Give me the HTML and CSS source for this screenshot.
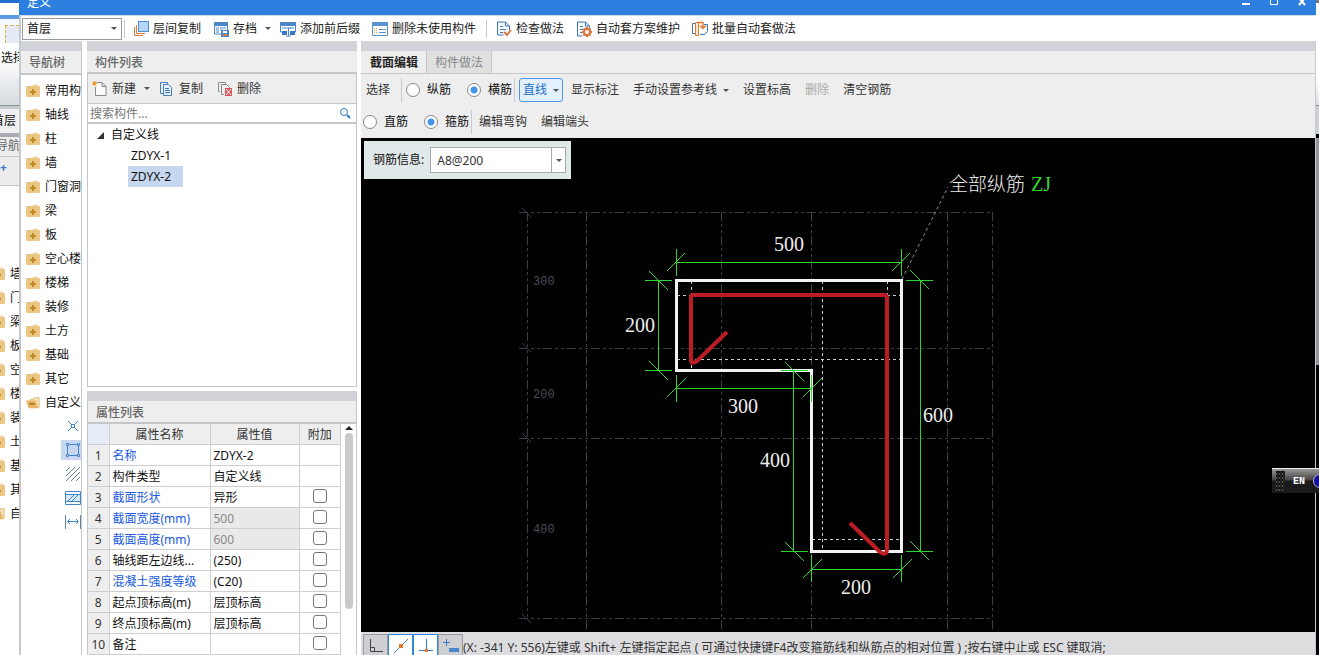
FILE: index.html
```html
<!DOCTYPE html>
<html lang="zh-CN">
<head>
<meta charset="utf-8">
<title>定义</title>
<link rel="stylesheet" href="styles.css">
</head>
<body>
<svg class="defs" width="0" height="0" aria-hidden="true">
  <symbol id="folder" viewBox="0 0 14 14"><path d="M7 2V.5h5V2" fill="#efd9ae"/><rect y="2" width="14" height="11" rx="1" fill="#ecc784"/><path d="M7 5v6M4 8h6" stroke="#c08a2c" stroke-width="2"/></symbol>
  <symbol id="folder-open" viewBox="0 0 16 14"><path d="M5 3h3l1-2h6v11H5z" fill="#f6e3bd" stroke="#e3b35f"/><path d="M0 4h11l3 9H3z" fill="#e6b463"/><path d="M4 8h6" stroke="#a87520" stroke-width="2"/></symbol>
  <symbol id="i-layers" viewBox="0 0 16 16"><path d="M1.500 6v8.500H10M3.500 4v8.500H12" fill="none" stroke="#d87b3a"/><rect x="5.500" y=".5" width="10" height="10" fill="#b5d6fa" stroke="#4c8fd8"/></symbol>
  <symbol id="i-save" viewBox="0 0 16 16"><path d="M1 1h14v4H1z" fill="#4a86c8"/><path d="M1.500 1v12H8M14.500 4v5M3 7h3M7 7h6M3 9h3M7 9h2M3 11h3" fill="none" stroke="#4a86c8"/><path d="M8 9h8v7H8z" fill="#4a86c8"/><path d="M10 10h4v2h-4z" fill="#fff"/><path d="M10 13h4v2h-4z" fill="#e67a35"/></symbol>
  <symbol id="i-affix" viewBox="0 0 16 16"><path d="M0 1h16v4H0z" fill="#4a86c8"/><path d="M.5 2v9H5M15.500 2v9H12M2 7h4M10 7h4M6 7h5M8.500 7v8M6 15h5" fill="none" stroke="#4a86c8"/><path d="M2 10h5v4H2zM10 10h5v4h-5z" fill="#3878c5"/></symbol>
  <symbol id="i-list" viewBox="0 0 16 16"><path d="M.5 1.500h15v13H.5z" fill="#fff" stroke="#5a8fc8"/><path d="M0 1h16v4H0z" fill="#5a93d2"/><path d="M2 7.500h3M2 9.500h3M2 11.500h3" stroke="#e29b3c" stroke-dasharray="1 1"/><path d="M7 8.500h7M7 11.500h7" stroke="#5a8fc8"/></symbol>
  <symbol id="i-check" viewBox="0 0 16 16"><path d="M13.500 9V5l-4-4h-8v13h6M9.500 1v4h4" fill="#f5f9fe" stroke="#4077b5"/><path d="M4 5.500h3M4 8.500h6M4 11.500h3" stroke="#4077b5"/><path d="m8 11 3 3 4-5" fill="none" stroke="#df783f" stroke-width="2"/></symbol>
  <symbol id="i-gear" viewBox="0 0 16 16"><path d="M13.500 7V5l-4-4h-8v14h5M9.500 1v4h4" fill="#f5f9fe" stroke="#4077b5"/><path d="M4 5.500h3M4 8.500h3M4 11.500h2" stroke="#4077b5"/><circle cx="11" cy="11" r="3" fill="#fff" stroke="#df743a" stroke-width="2"/><path d="M11 6v2M11 14v2M6 11h2M14 11h2M7.500 7.500 9 9M13 13l1.500 1.500M14.500 7.500 13 9M9 13l-1.500 1.500" stroke="#df743a" stroke-width="2"/></symbol>
  <symbol id="i-batch" viewBox="0 0 16 16"><path d="M3 2.500H.5v10H3M12 3.500h3.500v7l-3 3H8" fill="none" stroke="#4077b5"/><path d="M3.500 1.500h3v13h-3z" fill="#fde6cf" stroke="#e27a32"/><path d="M6 1.500h5V7M8 4.500l3 3 3-3" fill="none" stroke="#e27a32" stroke-width="1.500"/></symbol>
  <symbol id="i-new" viewBox="0 0 16 16"><path d="M5 1.500h5l4 4v9H3.500V6M10 1.500v4h4" fill="#fbfbfb" stroke="#8a8a8a"/><path d="M2.500 0v5M0 2.500h5M.5.500l4 4M4.500.500l-4 4" stroke="#e99a2e"/></symbol>
  <symbol id="i-copy" viewBox="0 0 16 16"><path d="M4 12.500H1.500v-11h7V3" fill="none" stroke="#4680bd"/><path d="M4.500 3.500h5l3 3v8h-8z" fill="#e6f1fc" stroke="#4680bd"/><path d="M6 7.500h4M6 9.500h5M6 11.500h5" stroke="#4680bd"/></symbol>
  <symbol id="i-del" viewBox="0 0 16 16"><path d="M3 10.500H1.500v-9h7V3M7 13.500H4.500v-10h5l3 3V7" fill="none" stroke="#8a8a8a"/><path d="M8 7h7v8H8z" fill="#d9535b"/><path d="m9 8 5 6m0-6-5 6" stroke="#fff"/></symbol>
</svg>

<div class="desktop">
  <aside class="backdrop">
    <div class="back-title"></div>
    <div class="back-ribbon"><i class="back-frame"></i><span>选择</span></div>
    <div class="back-floor">首层</div>
    <div class="back-head">导航树</div>
    <div class="back-tools"><b>+</b></div>
    <ul class="back-list">
      <li><svg><use href="#folder"/></svg>墙</li>
      <li><svg><use href="#folder"/></svg>门窗洞</li>
      <li><svg><use href="#folder"/></svg>梁</li>
      <li><svg><use href="#folder"/></svg>板</li>
      <li><svg><use href="#folder"/></svg>空心楼</li>
      <li><svg><use href="#folder"/></svg>楼梯</li>
      <li><svg><use href="#folder"/></svg>装修</li>
      <li><svg><use href="#folder"/></svg>土方</li>
      <li><svg><use href="#folder"/></svg>基础</li>
      <li><svg><use href="#folder"/></svg>其它</li>
      <li><svg><use href="#folder-open"/></svg>自定义</li>
    </ul>
  </aside>

  <main class="window">
    <header class="titlebar">
      <span class="title">定义</span>
      <span class="window-buttons">
        <button aria-label="最小化"><svg viewBox="0 0 8 8"><path d="M0 4h8" stroke-width="2"/></svg></button>
        <button aria-label="最大化"><svg viewBox="0 0 8 8"><path d="M.5 0v4.500h7V0"/></svg></button>
        <button aria-label="关闭"><svg viewBox="0 0 8 8"><path d="M1-2l6 7M7-2 1 5" stroke-width="2"/></svg></button>
      </span>
    </header>

    <nav class="toolbar">
      <span class="floor"><select aria-label="楼层"><option>首层</option></select><i class="caret"></i></span>
      <i class="sep"></i>
      <button class="tool"><svg><use href="#i-layers"/></svg>层间复制</button>
      <button class="tool drop"><svg><use href="#i-save"/></svg>存档<i class="caret"></i></button>
      <button class="tool"><svg><use href="#i-affix"/></svg>添加前后缀</button>
      <button class="tool"><svg><use href="#i-list"/></svg>删除未使用构件</button>
      <i class="sep wide"></i>
      <button class="tool"><svg><use href="#i-check"/></svg>检查做法</button>
      <button class="tool"><svg><use href="#i-gear"/></svg>自动套方案维护</button>
      <button class="tool"><svg><use href="#i-batch"/></svg>批量自动套做法</button>
    </nav>

    <div class="columns">
      <section class="panel nav-panel">
        <h2 class="panel-head">导航树</h2>
        <ul class="nav-list">
          <li><svg><use href="#folder"/></svg>常用构件</li>
          <li><svg><use href="#folder"/></svg>轴线</li>
          <li><svg><use href="#folder"/></svg>柱</li>
          <li><svg><use href="#folder"/></svg>墙</li>
          <li><svg><use href="#folder"/></svg>门窗洞</li>
          <li><svg><use href="#folder"/></svg>梁</li>
          <li><svg><use href="#folder"/></svg>板</li>
          <li><svg><use href="#folder"/></svg>空心楼盖</li>
          <li><svg><use href="#folder"/></svg>楼梯</li>
          <li><svg><use href="#folder"/></svg>装修</li>
          <li><svg><use href="#folder"/></svg>土方</li>
          <li><svg><use href="#folder"/></svg>基础</li>
          <li><svg><use href="#folder"/></svg>其它</li>
          <li><svg><use href="#folder-open"/></svg>自定义</li>
        </ul>
        <ul class="shape-list">
          <li><svg viewBox="0 0 16 16"><path d="m3 3 4 4m2 2 4 4M13 3 9 7M7 9l-4 4M6.500 6.500h3v3h-3z"/></svg></li>
          <li class="selected"><svg viewBox="0 0 16 16"><path d="M2.500 4v8M13.500 4v8M4 2.500h8M4 13.500h8M1.500 1.500h2v2h-2zM12.500 1.500h2v2h-2zM1.500 12.500h2v2h-2zM12.500 12.500h2v2h-2z"/></svg></li>
          <li><svg viewBox="0 0 16 16" class="slate"><path d="m1 5 4-4M1 10l9-9M1 15 15 1M6 15l9-9M11 15l4-4"/></svg></li>
          <li><svg viewBox="0 0 16 16"><path fill="#d6e9fa" d="M.5 4.500h15v7H.5z"/><path d="M.5 1.500h15v13H.5zM3 11l6-6M7 11l6-6"/></svg></li>
          <li><svg viewBox="0 0 16 16"><path class="slate" d="M.5 1v14M15.500 1v14"/><path d="M3 7.500h10M5 5 2.500 7.500 5 10M11 5l2.500 2.500L11 10"/></svg></li>
        </ul>
      </section>

      <div class="stack">
        <section class="panel list-panel">
          <h2 class="panel-head">构件列表</h2>
          <div class="list-tools">
            <button class="tool"><svg><use href="#i-new"/></svg>新建<i class="caret"></i></button>
            <button class="tool"><svg><use href="#i-copy"/></svg>复制</button>
            <button class="tool"><svg><use href="#i-del"/></svg>删除</button>
          </div>
          <label class="search">
            <input type="text" placeholder="搜索构件..." aria-label="搜索构件">
            <svg viewBox="0 0 12 12"><circle cx="5" cy="5" r="3.500"/><path d="m8 8 3 3" stroke-width="2"/></svg>
          </label>
          <ul class="tree">
            <li><svg viewBox="0 0 7 7"><path d="M7 0v7H0z"/></svg>自定义线
              <ul><li><span>ZDYX-1</span></li><li><span class="selected">ZDYX-2</span></li></ul>
            </li>
          </ul>
        </section>

        <section class="panel props-panel">
          <h2 class="panel-head">属性列表</h2>
          <div class="props-body">
            <table class="props">
              <thead><tr><th></th><th>属性名称</th><th>属性值</th><th>附加</th></tr></thead>
              <tbody>
                <tr><th>1</th><td class="link">名称</td><td>ZDYX-2</td><td></td></tr>
                <tr><th>2</th><td>构件类型</td><td>自定义线</td><td></td></tr>
                <tr><th>3</th><td class="link">截面形状</td><td>异形</td><td><input type="checkbox" aria-label="附加 截面形状"></td></tr>
                <tr><th>4</th><td class="link">截面宽度(mm)</td><td class="locked">500</td><td><input type="checkbox" aria-label="附加 截面宽度"></td></tr>
                <tr><th>5</th><td class="link">截面高度(mm)</td><td class="locked">600</td><td><input type="checkbox" aria-label="附加 截面高度"></td></tr>
                <tr><th>6</th><td>轴线距左边线...</td><td>(250)</td><td><input type="checkbox" aria-label="附加 轴线距左边线"></td></tr>
                <tr><th>7</th><td class="link">混凝土强度等级</td><td>(C20)</td><td><input type="checkbox" aria-label="附加 混凝土强度等级"></td></tr>
                <tr><th>8</th><td>起点顶标高(m)</td><td>层顶标高</td><td><input type="checkbox" aria-label="附加 起点顶标高"></td></tr>
                <tr><th>9</th><td>终点顶标高(m)</td><td>层顶标高</td><td><input type="checkbox" aria-label="附加 终点顶标高"></td></tr>
                <tr><th>10</th><td>备注</td><td></td><td><input type="checkbox" aria-label="附加 备注"></td></tr>
              </tbody>
            </table>
            <div class="scroll"><i class="scroll-up"></i><i class="scroll-thumb"></i></div>
          </div>
        </section>
      </div>

      <section class="editor">
        <div class="tabs"><button class="tab active">截面编辑</button><button class="tab">构件做法</button></div>
        <div class="edit-row">
          <button class="cmd first">选择</button><i class="sep"></i>
          <label class="radio"><input type="radio" name="dir">纵筋</label>
          <label class="radio"><input type="radio" name="dir" checked>横筋</label>
          <i class="sep"></i>
          <button class="cmd pressed">直线<i class="caret"></i></button>
          <button class="cmd">显示标注</button>
          <button class="cmd">手动设置参考线<i class="caret"></i></button>
          <button class="cmd">设置标高</button>
          <button class="cmd" disabled>删除</button>
          <button class="cmd">清空钢筋</button>
        </div>
        <div class="edit-row hoop-row">
          <label class="radio"><input type="radio" name="bar">直筋</label>
          <label class="radio"><input type="radio" name="bar" checked>箍筋</label>
          <i class="sep"></i>
          <button class="cmd">编辑弯钩</button>
          <button class="cmd">编辑端头</button>
        </div>
        <div class="canvas">
          <svg class="drawing" role="img" aria-label="截面">
            <g transform="translate(-361 -138)">
              <g class="axis">
                <path d="M519 212.500H993M519 348.500H993M519 438.500H993M519 618.500H993M527.500 212V618M586.500 212V640M721.500 212V640M811.500 212V640M947.500 212V640M992.500 212V640"/>
                <path class="solid" d="m522 208 9 9M522 343l9 9M522 433l9 9M522 614l9 9"/>
                <text x="533" y="285">300</text><text x="533" y="398">200</text><text x="533" y="533">400</text>
              </g>
              <path class="leader" d="M902 279 948 187"/>
              <path class="guide" d="M677 295.500h14M691.500 281v14M677 359.500h224M691.500 359v11M822.500 281V551M887.500 281v14M887 295.500h14M812 539.500h89"/>
              <path class="outline" d="M676.500 280.500h225v271h-90v-181h-135z"/>
              <path class="rebar" d="m727 332-30 29q-6 4-6-1v-63q0-2 2-2h191q3 0 3 3v250q0 9-7 4l-30-29"/>
              <g class="dim">
                <path d="M677 262.500H901M676.500 249v27M901.500 249v27M667 271l18-18M892 271l18-18"/>
                <path d="M658.500 280V370M645 280.500h27M645 370.500h27M649 271l19 19M649 361l19 19"/>
                <path d="M677 388.500H811M676.500 375v27M811.500 375v27M667 397l19-19M803 397l19-19"/>
                <path d="M793.500 370V551M781 370.500h27M781 551.500h27M785 362l19 19M785 542l19 19"/>
                <path d="M920.500 280V551M906 280.500h27M906 551.500h27M910 270l19 19M910 541l19 19"/>
                <path d="M811 569.500H901M811.500 555v27M901.500 555v27M803 578l19-19M893 578l19-19"/>
              </g>
              <g class="dim-text">
                <text x="774" y="251">500</text><text x="625" y="332">200</text><text x="728" y="413">300</text>
                <text x="760" y="467">400</text><text x="923" y="422">600</text><text x="841" y="594">200</text>
              </g>
              <text class="note" x="949" y="191">全部纵筋</text>
              <text class="note-code" x="1031" y="191">ZJ</text>
            </g>
          </svg>
          <div class="rebar-info">
            <label for="rebar">钢筋信息:</label>
            <span class="combo"><input id="rebar" type="text" value="A8@200"><button aria-label="展开"><i class="caret"></i></button></span>
          </div>
        </div>
        <footer class="status">
          <button aria-label="正交"><svg viewBox="0 0 16 16"><path d="M2.500 1v12.500H15M3 9.500h3.500v4" stroke="#444"/></svg></button>
          <button class="on" aria-label="中点"><svg viewBox="0 0 16 16"><path d="M1 15 15 1" stroke="#4b84bd"/><path d="M6 6h4v4H6z" fill="#e27a32"/></svg></button>
          <button class="on" aria-label="垂点"><svg viewBox="0 0 16 16"><path d="M8.500 1v11M1 12.500h14" stroke="#3b78c0"/><path d="M7 11h3v3H7z" fill="#e27a32"/></svg></button>
          <button aria-label="动态输入"><svg viewBox="0 0 16 16"><path d="M3.500 1v7M0 4.500h7" stroke="#3b78c0"/><path d="M6 10h10v4H6z" fill="#4a87cf"/></svg></button>
          <output>(X: -341 Y: 556)左键或 Shift+ 左键指定起点 ( 可通过快捷键F4改变箍筋线和纵筋点的相对位置 ) ;按右键中止或 ESC 键取消;</output>
        </footer>
      </section>
    </div>
  </main>

  <aside class="backdrop-right"><div class="edge-ribbon"></div><div class="edge-bar"></div><div class="edge-scroll"></div></aside>
  <div class="ime"><i class="grip"></i><span>EN</span><i class="orb"></i></div>
</div>
</body>
</html>
```

FILE: styles.css
```css
* { box-sizing: border-box; }
body { margin: 0; color: #111; background: #000; font: 12px/16px "Noto Sans", "Noto Sans CJK SC", sans-serif; }
ul { margin: 0; padding: 0; list-style: none; }
button, input, select { margin: 0; font: inherit; color: inherit; }
button { padding: 0; border: 0; background: none; white-space: nowrap; }
.defs { position: absolute; }

.desktop { position: relative; display: grid; grid-template-columns: 19px minmax(0, 1fr) 3px; height: 100vh; overflow: hidden; }

/* Host application visible at the left edge */
.backdrop { overflow: hidden; background: #fff; white-space: nowrap; }
.back-title { height: 19px; background: linear-gradient(#1f6fd0 3px, #fff 3px 15px, #5b9be6 15px); }
.back-ribbon { height: 87px; padding-top: 6px; background: linear-gradient(#f6f9fc 24px, #fff 24px, #f4f6f8 50px, #d5dadd); border-bottom: 1px solid #8f9498; }
.back-ribbon span { display: block; padding: 7px 0 0 1px; }
.back-frame { display: block; height: 18px; margin-left: 5px; border: 1px dashed #e2b13c; border-right: 0; border-bottom: 0; background: linear-gradient(90deg, #e4ebf5 13px, #3b7bd0 13px); }
.back-floor { height: 27px; padding: 4px 3px 0 0; border-top: 3px solid #c5c9cc; background: #f0f0f0; direction: rtl; }
.back-head { height: 24px; padding-top: 1px; border-top: 4px solid #a9adb2; background: #ededed; color: #666; text-indent: -4px; border-bottom: 1px solid #c5c5c5; }
.back-tools { height: 29px; padding-top: 3px; background: #ededed; border-bottom: 1px solid #c5c5c5; }
.back-tools b { color: #3b78c8; }
.back-list { padding-top: 75px; }
.back-list li { display: flex; align-items: center; gap: 5px; height: 24px; padding-top: 1px; }
.back-list svg { flex: none; width: 14px; height: 14px; margin-left: -9px; }

/* Definition window */
.window { display: flex; flex-direction: column; min-width: 0; min-height: 0; background: #fff; }
.titlebar { display: flex; justify-content: space-between; height: 15px; padding: 0 10px 0 8px; background: #2d80e0; color: #fff; overflow: hidden; }
.title { line-height: 6px; }
.window-buttons { display: flex; gap: 20px; }
.window-buttons svg { display: block; width: 8px; height: 8px; fill: none; stroke: #fff; }
.window-buttons button { align-self: flex-start; }
.toolbar { display: flex; align-items: center; height: 26px; padding-left: 1px; border-top: 1px solid #d3dbe5; border-left: 2px solid #c5c8cd; margin-right: 1px; }
.floor { display: flex; align-items: center; width: 100px; height: 22px; border: 1px solid #9a9a9a; background: #fff; }
.floor select { flex: 1; width: 100%; height: 20px; padding: 0 4px; appearance: none; border: 0; background: none; color: #111; }
.floor .caret { margin: 0 4px 0 0; }
.sep { flex: none; width: 1px; height: 18px; margin: 0 2px; background: #c8cacf; }
.sep.wide { margin: 0 3px 0 4px; }
.tool { display: flex; align-items: center; gap: 4px; padding: 0 6px; color: #222; }
.tool.drop { padding-right: 3px; }
.tool svg { width: 16px; height: 16px; }
.caret { display: inline-block; width: 0; margin-left: 4px; border: 3px solid transparent; border-top-color: #555; border-bottom: 0; }

.columns { flex: 1; display: grid; grid-template-columns: 61px 270px minmax(0, 1fr); gap: 5px; min-height: 0; border-left: 2px solid #c5c8cd; border-right: 1px solid #c5c8cd; }
.panel { border-top: 10px solid #d2d3d8; background: #fff; overflow: hidden; }
.panel-head { height: 23px; margin: 0; padding: 3px 8px; border-bottom: 2px solid #c5c6c9; background: #eee; color: #666; font-size: 12px; font-weight: 500; line-height: 18px; white-space: nowrap; }
.nav-panel { display: flex; flex-direction: column; border-right: 1px solid #c5c8cd; }
.nav-panel .panel-head { flex: none; height: 24px; }
.nav-list { padding-top: 3px; }
.nav-list li { display: flex; align-items: center; gap: 5px; height: 24px; padding: 1px 0 0 5px; line-height: 18px; white-space: nowrap; overflow: hidden; }
.nav-list svg { flex: none; width: 14px; height: 14px; }
.shape-list li { display: flex; align-items: center; justify-content: flex-end; width: 20px; height: 20px; margin: 2px 0 4px auto; }
.shape-list svg { width: 16px; height: 16px; fill: none; stroke: #4186cd; }
.shape-list .slate { stroke: #6685a3; }
.selected { background: #c6d7ef; }

.stack { display: flex; flex-direction: column; gap: 4px; min-height: 0; }
.list-panel { flex: 1; min-height: 0; display: flex; flex-direction: column; border-bottom: 1px solid #c5c6c9; }
.list-panel .panel-head, .list-panel .list-tools, .search { flex: none; }
.list-tools { display: flex; align-items: center; height: 30px; background: #eee; border: 1px solid #c5c6c9; border-width: 0 1px 1px; }
.list-tools .tool { padding: 0 5px 0 4px; color: #333; }
.list-tools .tool:last-child { margin-left: 5px; }
.search { display: flex; align-items: center; height: 20px; padding: 0 5px 0 2px; border: 1px solid #c5c6c9; border-width: 0 1px 2px; }
.search input { flex: 1; min-width: 0; height: 18px; padding: 0; border: 0; outline: 0; background: none; }
.search input::placeholder { color: #777; opacity: 1; }
.search svg { width: 12px; height: 12px; fill: none; stroke: #2c7cc4; }
.tree { flex: 1; border: 1px solid #c5c6c9; border-width: 0 1px; }
.tree > li { padding-left: 9px; line-height: 21px; }
.tree > li > svg { width: 7px; height: 7px; margin-right: 7px; fill: #333; }
.tree ul { padding-left: 31px; }
.tree ul li { height: 21px; }
.tree span { display: inline-block; padding: 0 12px 0 3px; }

.props-panel { border-left: 1px solid #c5c6c9; border-right: 1px solid #c5c6c9; }
.props-body { display: grid; grid-template-columns: 1fr 15px; }
.props { width: 100%; table-layout: fixed; border-collapse: collapse; }
.props tr { height: 21px; }
.props th, .props td { height: 21px; padding: 2px 3px 0; border: 1px solid #cfcfcf; border-width: 0 1px 1px 0; line-height: 16px; text-align: left; white-space: nowrap; overflow: hidden; }
.props th { padding: 2px 0 0; background: #eee; color: #333; font-weight: 400; text-align: center; }
.props th:first-child { width: 21px; }
.props thead th:first-child { background: #e6edf8; }
.props thead th:nth-child(2) { width: 101px; }
.props thead th:nth-child(3) { width: 89px; }
.props td:last-child { padding-top: 0; text-align: center; }
.props .link { color: #2159e0; }
.props .locked { background: #e9e9e9; color: #888; }
.props input { display: block; width: 14px; height: 14px; margin: 0 auto 2px; appearance: none; border: 1px solid #777; border-radius: 3px; background: #fff; }
.scroll { display: flex; flex-direction: column; align-items: center; padding-top: 2px; }
.scroll-up { border: 4px solid transparent; border-top: 0; border-bottom-color: #222; }
.scroll-thumb { width: 8px; height: 176px; margin-top: 3px; border-radius: 4px; background: #c9c9c9; }

/* Section editor */
.editor { display: flex; flex-direction: column; min-width: 0; min-height: 0; margin-left: -1px; border-top: 10px solid #d2d3d8; }
.tabs { display: flex; flex: none; height: 23px; padding-left: 1px; background: #eee; border-bottom: 1px solid #c5c6c9; }
.tab { width: 65px; padding-top: 1px; border-right: 1px solid #c5c6c9; background: #e0e0e1; color: #888; }
.tab.active { background: #eee; color: #222; font-weight: 600; }
.edit-row { display: flex; flex: none; align-items: center; height: 32px; padding-left: 2px; background: #eee; }
.edit-row .sep { height: 24px; margin: 0 4px 0 2px; }
.hoop-row .sep { margin-right: 0; }
.cmd { padding: 0 7px; color: #333; }
.cmd .caret { margin: 0 0 2px 6px; }
.cmd.first { padding: 0 9px 0 3px; }
.cmd:disabled { color: #aaa; }
.cmd.pressed { height: 24px; margin-right: 1px; padding: 0 3px; border: 1px solid #4a96e6; border-radius: 3px; background: #e3f0fd; color: #1a6fc4; }
.radio { display: flex; align-items: center; gap: 7px; }
.radio + .radio { margin-left: 16px; }
.radio input { width: 14px; height: 14px; appearance: none; border: 1px solid #888; border-radius: 50%; background: #fff; }
.radio input:checked { background: radial-gradient(circle, #4594ea 3px, #fff 4px); }

.canvas { position: relative; flex: 1; min-height: 0; background: #000; overflow: hidden; }
.drawing { display: block; width: 100%; height: 100%; fill: none; }
.axis { stroke: #3c3d44; stroke-dasharray: 9 3 3 3 3 3; }
.axis .solid { stroke-dasharray: none; }
.axis text { fill: #4a4f58; stroke: none; font: 12px "Liberation Mono", monospace; }
.leader { stroke: #999; stroke-dasharray: 3 3; }
.guide { stroke: #c4cfe0; stroke-dasharray: 3 3; }
.outline { stroke: #f2f2f2; stroke-width: 3; }
.rebar { stroke: #be1c25; stroke-width: 4; }
.dim { stroke: #2fd62f; }
.dim-text { fill: #eee; font: 20px "Liberation Serif", serif; }
.note { fill: #eee; font: 300 19px "Noto Sans CJK SC", sans-serif; }
.note-code { fill: #2fd62f; font: 20px "Liberation Serif", serif; }
.rebar-info { position: absolute; top: 3px; left: 3px; display: flex; align-items: center; gap: 6px; height: 38px; padding: 0 5px 0 9px; background: #e1e8e9; }
.combo { display: flex; width: 136px; height: 26px; border: 1px solid #a4a9aa; background: #fff; }
.combo input { flex: 1; min-width: 0; padding: 2px 6px 0; border: 0; outline: 0; background: none; color: #333; }
.combo button { width: 14px; border-left: 1px solid #a4a9aa; }
.combo .caret { display: block; margin: 0 auto; }

.status { display: flex; flex: none; align-items: center; height: 23px; padding-left: 2px; background: #dddde0; color: #333; white-space: nowrap; overflow: hidden; }
.status button { flex: none; display: grid; place-items: center; width: 25px; height: 23px; margin-top: 4px; border: 1px solid #9b9ca0; background: #cecfd2; }
.status .on { border-color: #2f86e0; background: #fff; }
.status svg { width: 16px; height: 16px; fill: none; }
.status output { padding-top: 8px; }

/* Host application at the right edge, and the input method bar */
.backdrop-right { background: #000; }
.edge-ribbon { height: 106px; background: linear-gradient(#777 3px, #fff 3px 80px, #dadde0); border-bottom: 1px solid #888; }
.edge-bar { height: 28px; background: #ccd0d4; }
.edge-scroll { height: 227px; margin-top: 4px; background: #96969a; }
.ime { position: absolute; top: 468px; right: 0; display: flex; align-items: center; width: 47px; height: 25px; padding-left: 4px; overflow: hidden; border-top: 1px solid #eee; background: linear-gradient(#999, #444 45%, #1b1b1b 50%); color: #fff; font: 700 10px "Liberation Mono", monospace; }
.ime span { padding: 0 8px; }
.grip { flex: none; width: 9px; height: 20px; background: conic-gradient(#0000 75%, #000 0) 0 0 / 3px 4px, linear-gradient(90deg, #555 50%, #222 0) 0 0 / 3px 4px; }
.orb { flex: none; width: 14px; height: 14px; border: 1px solid #b8b8d0; border-radius: 50%; background: #10109a; }
```
